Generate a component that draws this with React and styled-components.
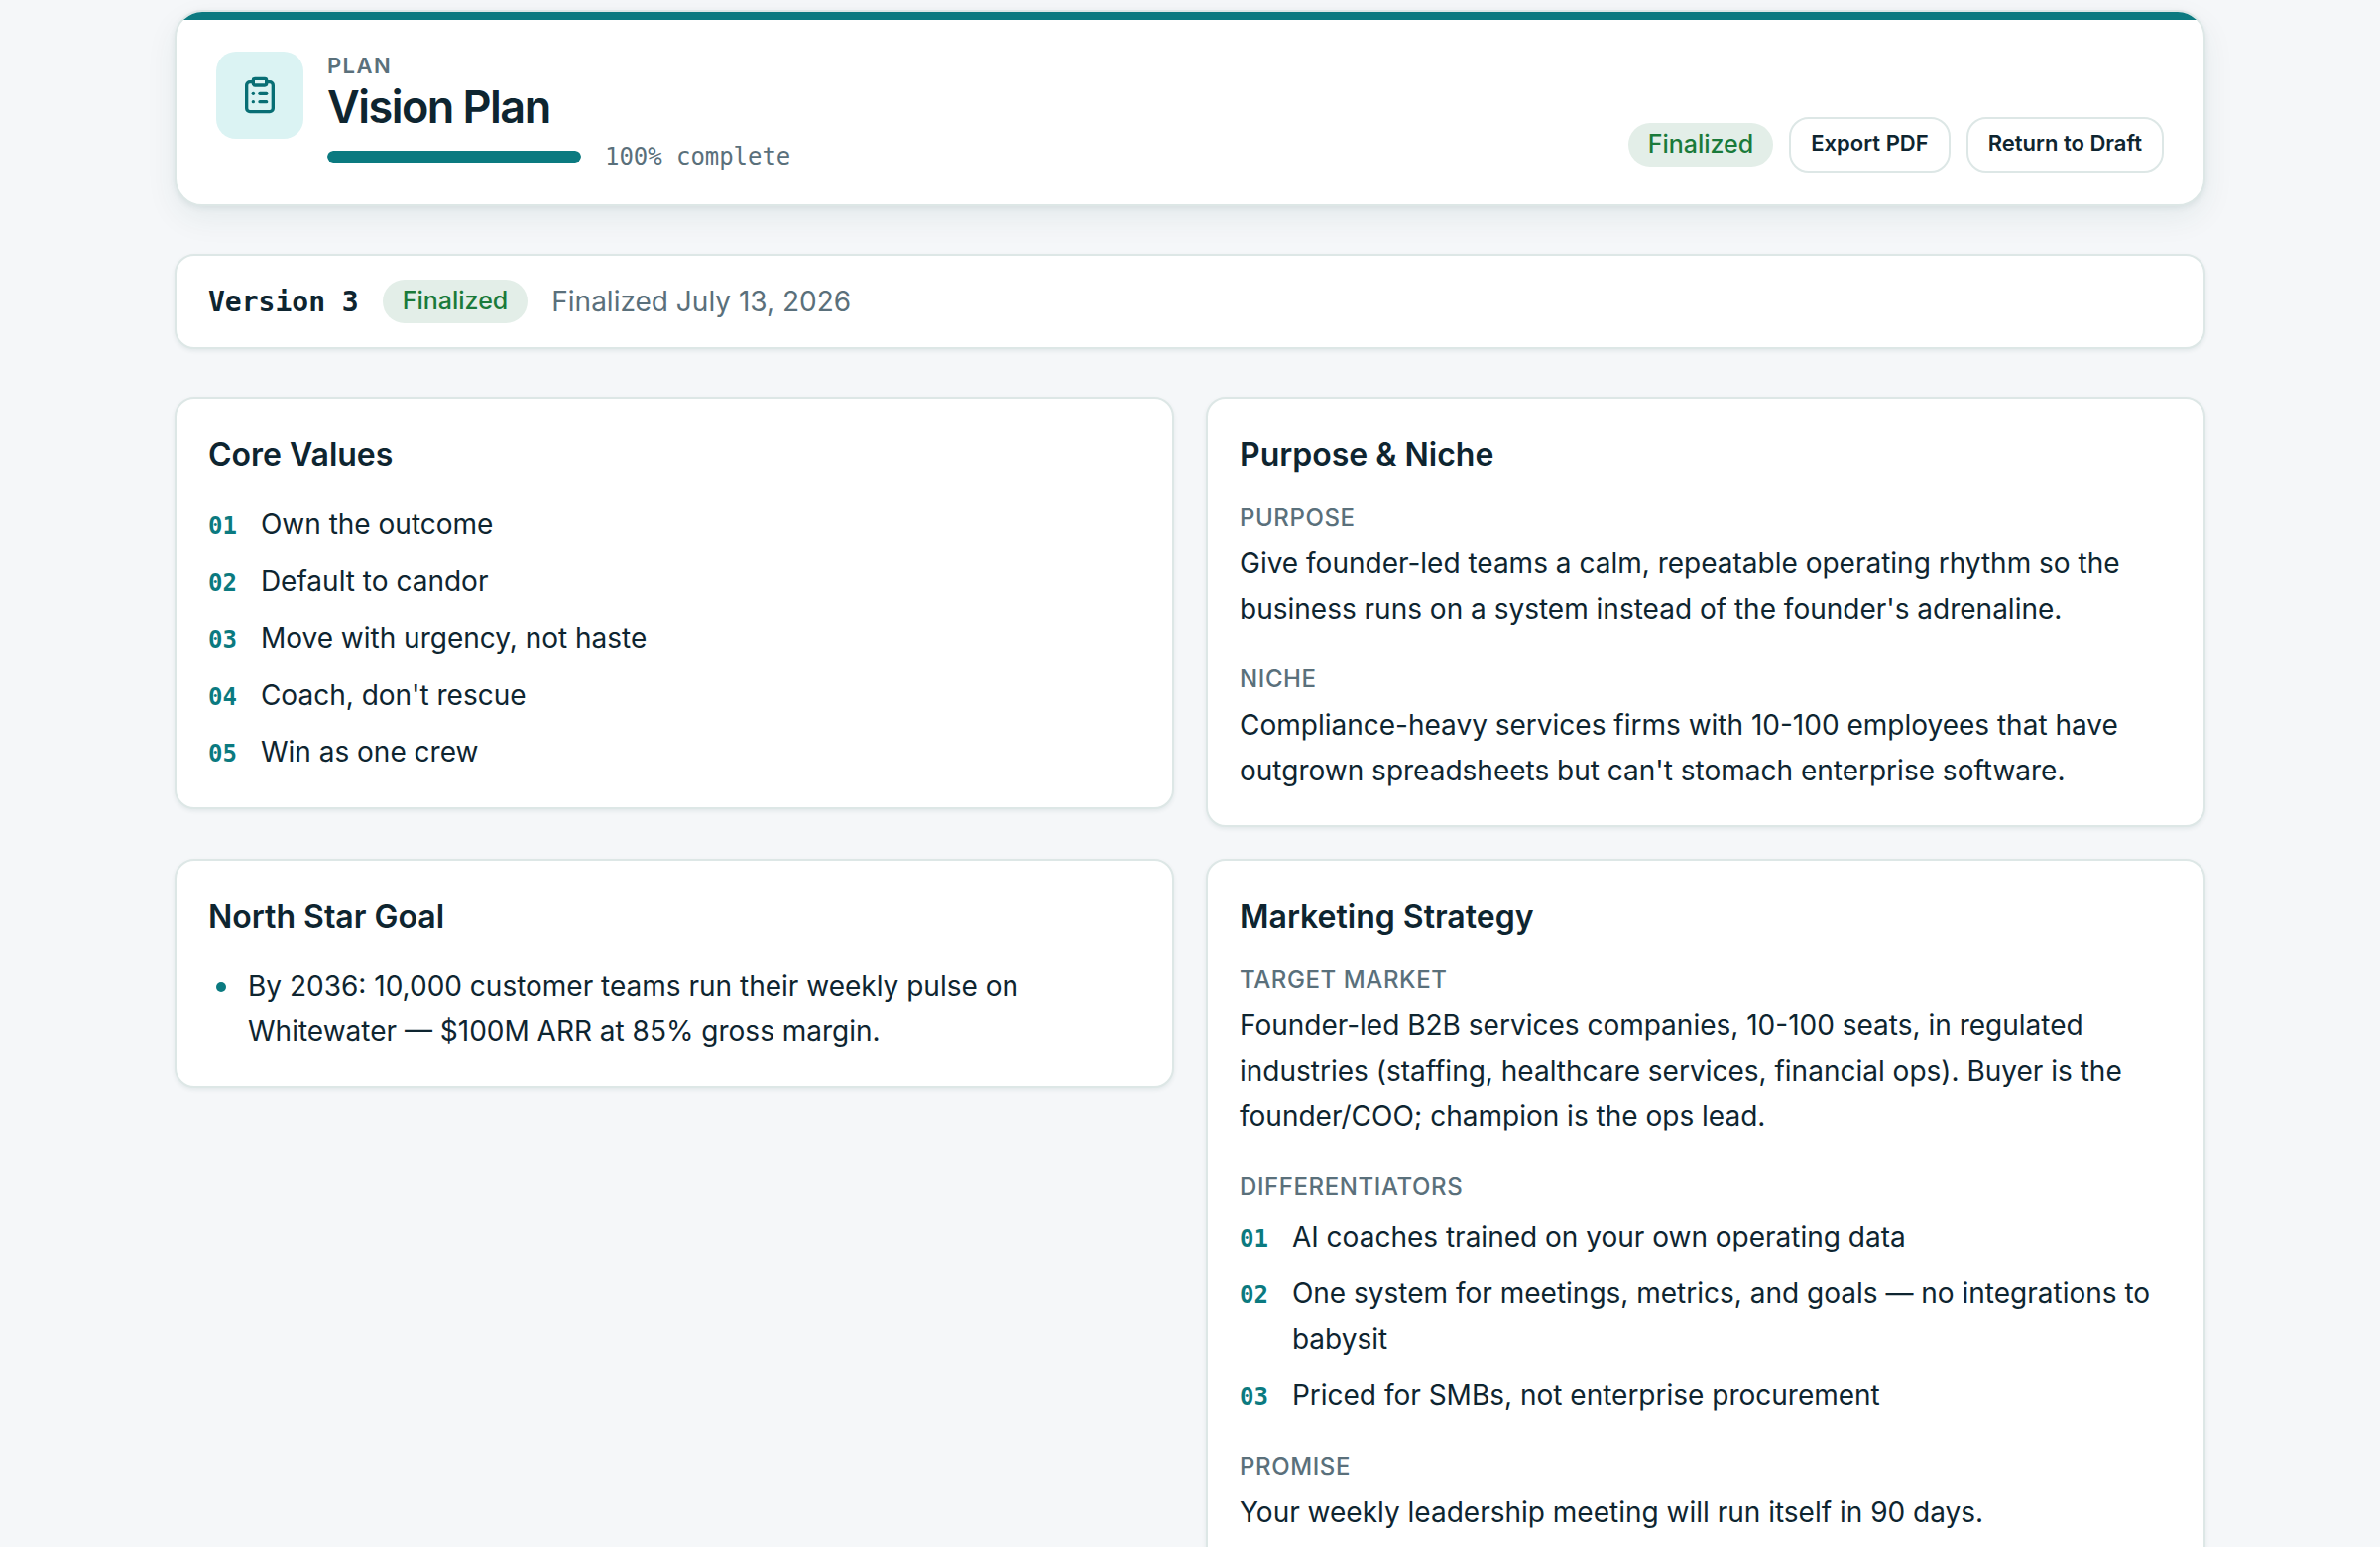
import React from 'react';
import styled, { createGlobalStyle } from 'styled-components';
import { ClipboardList } from 'lucide-react';

const plan = {
    title: 'Vision Plan',
    progress: 100,
    version: 3,
    finalizedOn: 'July 13, 2026',
    coreValues: [
        'Own the outcome',
        'Default to candor',
        'Move with urgency, not haste',
        "Coach, don't rescue",
        'Win as one crew',
    ],
    purpose: "Give founder-led teams a calm, repeatable operating rhythm so the business runs on a system instead of the founder's adrenaline.",
    niche: "Compliance-heavy services firms with 10-100 employees that have outgrown spreadsheets but can't stomach enterprise software.",
    northStar: ['By 2036: 10,000 customer teams run their weekly pulse on Whitewater — $100M ARR at 85% gross margin.'],
    targetMarket: 'Founder-led B2B services companies, 10-100 seats, in regulated industries (staffing, healthcare services, financial ops). Buyer is the founder/COO; champion is the ops lead.',
    differentiators: [
        'AI coaches trained on your own operating data',
        'One system for meetings, metrics, and goals — no integrations to babysit',
        'Priced for SMBs, not enterprise procurement',
    ],
    promise: 'Your weekly leadership meeting will run itself in 90 days.',
};

const NumberedList = ({ items }) => (
    <List>
        {items.map((item, i) => (
            <NumberedItem key={item}>
                <ItemNumber>{String(i + 1).padStart(2, '0')}</ItemNumber>
                <span>{item}</span>
            </NumberedItem>
        ))}
    </List>
)

const Field = ({ label, gap, children }) => (
    <FieldWrapper $gap={gap}>
        <FieldLabel>{label}</FieldLabel>
        {children}
    </FieldWrapper>
)

const App = () => {
    return (
        <React.Fragment>
            <GlobalStyle />
            <Page>
                <Header>
                    <IconTile>
                        <ClipboardList size={40} strokeWidth={2} />
                    </IconTile>
                    <HeaderInfo>
                        <Eyebrow>Plan</Eyebrow>
                        <Title>{plan.title}</Title>
                        <ProgressRow>
                            <Track>
                                <Fill style={{ width: `${plan.progress}%` }} />
                            </Track>
                            <ProgressText>{plan.progress}% complete</ProgressText>
                        </ProgressRow>
                    </HeaderInfo>
                    <Actions>
                        <Badge>Finalized</Badge>
                        <Button>Export PDF</Button>
                        <Button>Return to Draft</Button>
                    </Actions>
                </Header>

                <VersionBar>
                    <VersionName>Version {plan.version}</VersionName>
                    <Badge>Finalized</Badge>
                    <VersionDate>Finalized {plan.finalizedOn}</VersionDate>
                </VersionBar>

                <Grid>
                    <Card>
                        <CardTitle>Core Values</CardTitle>
                        <NumberedList items={plan.coreValues} />
                    </Card>
                    <Card>
                        <CardTitle>Purpose &amp; Niche</CardTitle>
                        <Fields>
                            <Field label="Purpose"><Text>{plan.purpose}</Text></Field>
                            <Field label="Niche"><Text>{plan.niche}</Text></Field>
                        </Fields>
                    </Card>
                    <Card>
                        <CardTitle>North Star Goal</CardTitle>
                        <List>
                            {plan.northStar.map((goal) => <BulletItem key={goal}>{goal}</BulletItem>)}
                        </List>
                    </Card>
                    <Card>
                        <CardTitle>Marketing Strategy</CardTitle>
                        <Fields>
                            <Field label="Target Market"><Text>{plan.targetMarket}</Text></Field>
                            <Field label="Differentiators" gap={12}>
                                <NumberedList items={plan.differentiators} />
                            </Field>
                            <Field label="Promise"><Text>{plan.promise}</Text></Field>
                        </Fields>
                    </Card>
                </Grid>
            </Page>
        </React.Fragment>
    )
}

export default App;

const mono = `'DejaVu Sans Mono', 'Liberation Mono', monospace`

const GlobalStyle = createGlobalStyle`
*, *::before, *::after {
box-sizing: border-box;
}
body {
margin: 0;
background: #f5f7f9;
color: #0e2530;
font-family: Inter, 'Liberation Sans', sans-serif;
font-size: 28px;
line-height: 1.625;
-webkit-font-smoothing: antialiased;
}
`

const Page = styled.main`
width: 2048px;
height: 1560px;
margin: 0 auto;
padding-top: 10px;
`

const Panel = styled.section`
background: #fff;
border: 2px solid #dde7e6;
border-radius: 20px;
box-shadow: 0 2px 4px rgba(11, 70, 66, 0.08);
`

const Header = styled(Panel)`
display: flex;
align-items: flex-start;
height: 198px;
padding: 32px 40px;
border-radius: 28px;
overflow: hidden;
flex-wrap: wrap;
column-gap: 24px;
box-shadow: 0 2px 6px rgba(11, 70, 66, 0.08), 0 12px 32px rgba(11, 70, 66, 0.07);

&::before {
content: '';
flex: 0 0 calc(100% + 80px);
height: 8px;
margin: -32px -40px 32px;
background: #0b7a80;
}
`

const IconTile = styled.div`
display: flex;
align-items: center;
justify-content: center;
width: 88px;
height: 88px;
border-radius: 20px;
background: #dbf3f3;
color: #086e74;
`

const HeaderInfo = styled.div`
flex: 1;
`

const Eyebrow = styled.div`
font-size: 22px;
font-weight: 600;
line-height: 28px;
letter-spacing: 0.065em;
text-transform: uppercase;
color: #5a707b;
`

const Title = styled.h1`
margin: 0;
font-size: 45px;
font-weight: 600;
line-height: 56px;
letter-spacing: -0.034em;
`

const ProgressRow = styled.div`
display: flex;
align-items: center;
gap: 24px;
margin-top: 4px;
`

const Track = styled.div`
width: 256px;
height: 12px;
border-radius: 6px;
background: #e3ebeb;
overflow: hidden;
`

const Fill = styled.div`
height: 100%;
border-radius: 6px;
background: #0b7a80;
`

const ProgressText = styled.span`
font-family: ${mono};
font-size: 24px;
line-height: 36px;
letter-spacing: -0.05px;
color: #5a707b;
`

const Actions = styled.div`
display: flex;
align-items: center;
gap: 16px;
margin-top: 66px;
`

const Badge = styled.span`
display: inline-flex;
align-items: center;
height: 44px;
padding: 0 20px 1px;
border-radius: 22px;
background: #e3eee8;
color: #1a7a3a;
font-size: 25px;
font-weight: 500;
line-height: 31px;
`

const Button = styled.button`
height: 56px;
padding: 0 20px 4px;
border: 2px solid #dde7e6;
border-radius: 20px;
background: #fff;
color: #0e2530;
font-family: inherit;
font-size: 22px;
font-weight: 600;
white-space: nowrap;
cursor: pointer;
`

const VersionBar = styled(Panel)`
display: flex;
align-items: center;
gap: 24px;
height: 96px;
margin-top: 48px;
padding: 0 32px;
`

const VersionName = styled.span`
padding-top: 2px;
font-family: ${mono};
font-weight: 600;
`

const VersionDate = styled.span`
padding-top: 2px;
color: #5a707b;
`

const Grid = styled.div`
display: grid;
grid-template-columns: 1fr 1fr;
align-items: start;
gap: 32px;
margin-top: 48px;
`

const Card = styled(Panel)`
padding: 32px;
`

const CardTitle = styled.h2`
margin: 0 0 22px;
font-size: 32px;
font-weight: 600;
line-height: 50px;
`

const Fields = styled.div`
display: flex;
flex-direction: column;
gap: 32px;
`

const FieldWrapper = styled.div`
display: flex;
flex-direction: column;
gap: ${({ $gap }) => $gap || 8}px;
`

const FieldLabel = styled.div`
font-size: 24px;
font-weight: 500;
line-height: 32px;
letter-spacing: 0.025em;
text-transform: uppercase;
color: #5a707b;
`

const Text = styled.p`
margin: 0;
`

const List = styled.ul`
display: flex;
flex-direction: column;
gap: 12px;
margin: 0;
padding: 0;
list-style: none;
`

const NumberedItem = styled.li`
display: flex;
align-items: baseline;
gap: 24px;
`

const ItemNumber = styled.span`
font-family: ${mono};
font-size: 24px;
font-weight: 600;
line-height: 32px;
color: #0b7a80;
`

const BulletItem = styled.li`
display: flex;
gap: 22px;

&::before {
content: '';
flex: none;
width: 10px;
height: 10px;
margin: 18px 0 0 8px;
border-radius: 50%;
background: #0b7a80;
}
`
